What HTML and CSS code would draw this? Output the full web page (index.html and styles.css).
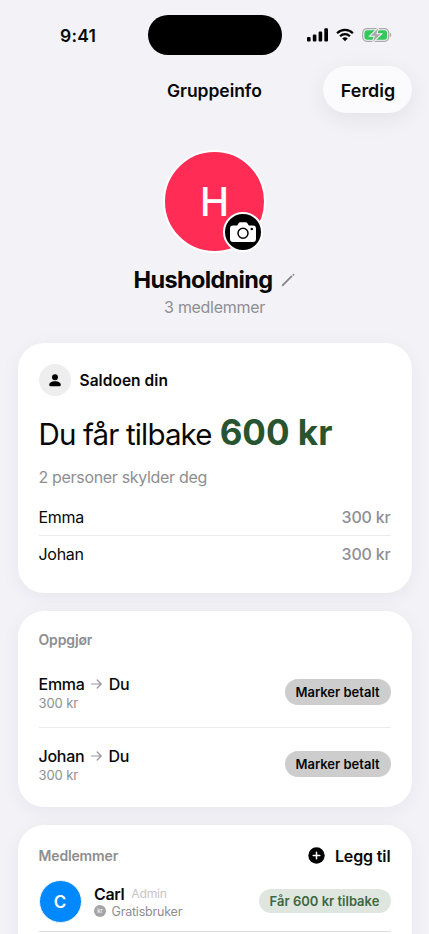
FILE: index.html
```html
<!DOCTYPE html>
<html lang="nb">
<head>
<meta charset="utf-8">
<title>Gruppeinfo</title>
<link rel="stylesheet" href="styles.css">
</head>
<body>
<div class="screen">
  <header class="status">
    <div class="time">9:41</div>
    <div class="island"></div>
    <div class="indicators">
      <svg class="signal" width="22" height="14" viewBox="0 0 22 14"><rect x="0" y="9" width="3.6" height="4.6" rx="1.1"/><rect x="5.8" y="6.6" width="3.6" height="7" rx="1.1"/><rect x="11.6" y="3.6" width="3.6" height="10" rx="1.1"/><rect x="17.3" y="0.3" width="3.7" height="13.3" rx="1.1"/></svg>
      <svg class="wifi" width="18" height="14" viewBox="0 0 18 14"><path d="M1.1 5.2a11.2 11.2 0 0 1 15.8 0M4.1 8.2a7 7 0 0 1 9.8 0" fill="none" stroke="#000" stroke-width="2.3"/><path d="M9 13.3 6.2 10.5a4 4 0 0 1 5.6 0z"/></svg>
      <svg class="battery" width="30" height="14" viewBox="0 0 30 14"><rect x=".7" y=".6" width="26" height="12.8" rx="4.2" fill="none" stroke="#a9a9ae" stroke-width="1.2"/><rect x="2.4" y="2.2" width="22.6" height="9.6" rx="2.8" fill="#34c759"/><path d="M27.900 4.800c1.800.6 1.800 3.800 0 4.400z" fill="#a9a9ae"/><path d="M16.200.3 8.600 7.800h4.300L11 13.700l7.600-7.400h-4.300z" fill="#a9a9ae" stroke="#f2f2f7" stroke-width="2" paint-order="stroke"/></svg>
    </div>
  </header>

  <nav class="navbar">
    <h1 class="nav-title">Gruppeinfo</h1>
    <button class="done">Ferdig</button>
  </nav>

  <section class="profile">
    <div class="group-avatar">H
      <span class="camera"><svg width="26" height="21" viewBox="0 0 26 21"><path d="M3 3.500h4.200l1.400-2.300Q9.300.3 10.400.3h5.200q1.100 0 1.800.9l1.400 2.300H23q3 0 3 3V17q0 3-3 3H3q-3 0-3-3V6.500q0-3 3-3z" fill="#fff"/><circle cx="13" cy="11.300" r="5" fill="none" stroke="#000" stroke-width="1.500"/><circle cx="21.800" cy="7" r="1.300"/></svg></span>
    </div>
    <div class="name-row"><h2 class="name">Husholdning</h2><svg width="14" height="14" viewBox="0 0 14 14"><path d="M1.600 12.300 11 2.900" stroke="#87878b" stroke-width="1.900"/><path d="M.5 13.500 1.300 11.400 2.600 12.700zM11.300 1.800l1-.9q.5-.3.900.1.400.4.100.9l-.9 1z" fill="#87878b"/></svg></div>
    <div class="count">3 medlemmer</div>
  </section>

  <main class="cards">
    <section class="card balance">
      <div class="card-head">
        <span class="person"><svg width="12" height="13" viewBox="0 0 12 13"><circle cx="6" cy="3.300" r="3"/><path d="M.2 10.700C.3 8.600 2.800 7.300 6 7.300s5.700 1.300 5.800 3.400q0 1.500-1.500 1.500H1.700Q.2 12.200.2 10.700z"/></svg></span>
        <span class="head-label">Saldoen din</span>
      </div>
      <p class="total"><span class="total-text">Du får tilbake</span><strong class="amount">600 kr</strong></p>
      <p class="debtors">2 personer skylder deg</p>
      <div class="debt"><span class="debt-name">Emma</span><span class="debt-sum">300 kr</span></div>
      <div class="debt"><span class="debt-name">Johan</span><span class="debt-sum">300 kr</span></div>
    </section>

    <section class="card settle">
      <h3 class="section-title">Oppgjør</h3>
      <div class="transfer">
        <div class="transfer-info">
          <div class="route"><span>Emma</span><svg width="11" height="10" viewBox="0 0 11 10"><path d="M.6 5h9.600M6.200 1 10.200 5 6.200 9"/></svg><span>Du</span></div>
          <div class="sub">300 kr</div>
        </div>
        <button class="mark">Marker betalt</button>
      </div>
      <div class="transfer">
        <div class="transfer-info">
          <div class="route"><span>Johan</span><svg width="11" height="10" viewBox="0 0 11 10"><path d="M.6 5h9.600M6.200 1 10.200 5 6.200 9"/></svg><span>Du</span></div>
          <div class="sub">300 kr</div>
        </div>
        <button class="mark">Marker betalt</button>
      </div>
    </section>

    <section class="card members">
      <div class="members-head">
        <h3 class="section-title">Medlemmer</h3>
        <button class="add"><svg width="17" height="17" viewBox="0 0 17 17"><circle cx="8.500" cy="8.500" r="8.200"/><path d="M8.500 5.200v6.600M5.200 8.500h6.600" stroke="#fff" stroke-width="1.500" stroke-linecap="round"/></svg><span>Legg til</span></button>
      </div>
      <div class="member">
        <span class="member-avatar">C</span>
        <div class="member-info">
          <div class="member-name"><span class="carl">Carl</span><span class="role">Admin</span></div>
          <div class="plan"><span class="coin">kr</span><span class="plan-label">Gratisbruker</span></div>
        </div>
        <span class="gets">Får 600 kr tilbake</span>
      </div>
    </section>
  </main>
</div>
</body>
</html>
```
FILE: styles.css
```css
* { box-sizing: border-box; margin: 0; padding: 0; }
html, body { height: 934px; overflow: hidden; }
body { background: #f2f2f7; color: #080808; font-family: Inter, "Liberation Sans", sans-serif; }
button { font: inherit; color: inherit; border: 0; background: none; white-space: nowrap; }
span, p, h1, h2, h3 { white-space: nowrap; }
svg { display: block; flex: none; }
.screen { width: 429px; height: 934px; overflow: hidden; display: flex; flex-direction: column; }

.status { height: 66px; flex: none; padding-top: 15px; display: grid; grid-template-columns: 147.500px 134.500px 1fr; }
.time { padding-left: 60px; padding-top: 1px; line-height: 40px; font-size: 17.500px; font-weight: 600; letter-spacing: .2px; }
.island { height: 39.500px; border-radius: 20px; background: #000; }
.indicators { height: 40px; padding-left: 25px; display: flex; align-items: center; }
.wifi { margin-left: 6.500px; }
.battery { margin-left: 8px; }

.navbar { height: 48px; flex: none; display: grid; grid-template-columns: 323px 89px; }
.nav-title { padding-left: 167px; padding-top: 1px; font-size: 17.500px; line-height: 48px; font-weight: 600; letter-spacing: -.05px; }
.done { height: 47px; padding: 2px 0 0 1px; border-radius: 24px; background: #fbfbfe; font-size: 17.900px; font-weight: 600; box-shadow: 0 6px 24px rgba(0,0,0,.07); }

.profile { height: 229px; flex: none; padding-top: 36px; display: flex; flex-direction: column; align-items: center; }
.group-avatar { position: relative; width: 103px; height: 103px; border: 2px solid #fff; border-radius: 50%; background: #ff2d55; color: #fff; font-size: 39px; font-weight: 500; line-height: 99px; text-align: center; }
.camera { position: absolute; right: 1.500px; bottom: -1px; width: 40px; height: 40px; border: 2px solid #fff; border-radius: 50%; background: #000; display: grid; place-items: center; }
.name-row { margin-top: 11px; height: 32px; display: flex; align-items: center; gap: 9px; }
.name { font-size: 23.500px; line-height: 32px; font-weight: 700; letter-spacing: -.65px; }
.count { height: 24px; line-height: 23px; font-size: 16px; letter-spacing: -.3px; color: #8e8e93; }

.cards { padding: 0 17.500px; display: flex; flex-direction: column; gap: 18px; }
.card { flex: none; padding: 0 21px; border-radius: 26px; background: #fff; box-shadow: 0 4px 20px rgba(30,20,60,.05); }
.balance { height: 249.500px; padding-top: 21px; }
.card-head { height: 32px; display: flex; align-items: center; gap: 9px; }
.person { width: 32px; height: 32px; border-radius: 50%; background: #eee; display: grid; place-items: center; }
.head-label { font-size: 15.500px; font-weight: 600; letter-spacing: .05px; }
.total { margin-top: 14px; height: 44px; display: flex; align-items: baseline; gap: 8px; line-height: 44px; }
.total-text { font-size: 29.500px; letter-spacing: -.85px; }
.amount { font-size: 35px; font-weight: 700; color: #285430; }
.debtors { margin-top: 11px; height: 24px; line-height: 24px; font-size: 16px; letter-spacing: -.32px; color: #8e8e90; }
.debt { height: 36.500px; display: flex; align-items: center; justify-content: space-between; font-size: 16px; }
.debt:nth-of-type(2) { margin-top: 10px; height: 37px; border-bottom: 1px solid #ebebee; }
.debt-name { letter-spacing: -.3px; }
.debt-sum { font-weight: 500; letter-spacing: -.2px; color: #8e8e93; }

.settle { height: 196.500px; padding-top: 17px; }
.section-title { height: 24px; line-height: 24px; font-size: 14px; font-weight: 600; letter-spacing: -.15px; color: #8e8e90; }
.transfer { height: 71.500px; display: flex; align-items: center; justify-content: space-between; }
.transfer:nth-of-type(1) { margin-top: 5px; border-bottom: 1px solid #ebebed; }
.transfer-info { padding-top: 1px; }
.route { height: 21px; display: flex; align-items: center; gap: 6.500px; padding-top: 1px; font-size: 16px; font-weight: 500; letter-spacing: -.25px; }
.route path { fill: none; stroke: #98989c; stroke-width: 1.200; stroke-linecap: round; stroke-linejoin: round; }
.sub { height: 18px; line-height: 19px; font-size: 13px; letter-spacing: -.1px; color: #8e8e93; }
.mark { width: 106px; height: 26px; border-radius: 13px; background: #cdcdcd; font-size: 13px; font-weight: 600; }

.members { height: 200px; padding-top: 17.500px; }
.members-head { height: 26px; display: flex; align-items: center; justify-content: space-between; }
.add { display: flex; align-items: center; gap: 10px; font-size: 16px; font-weight: 600; letter-spacing: -.12px; }
.member { height: 63px; padding-top: 3px; display: flex; align-items: center; border-bottom: 1px solid #ddd; }
.member-avatar { width: 43px; height: 43px; border: 1px solid #f4f4f4; border-radius: 50%; background: #0088ff; color: #fff; font-size: 17px; font-weight: 600; line-height: 42px; text-align: center; }
.member-info { margin-left: 12.500px; padding-top: 1px; }
.member-name { height: 19px; display: flex; align-items: center; gap: 7px; }
.carl { font-size: 16px; font-weight: 600; letter-spacing: -.4px; }
.role { font-size: 12.200px; letter-spacing: -.2px; color: #c6c6c8; }
.plan { height: 16px; display: flex; align-items: center; gap: 5.500px; font-size: 12.500px; color: #8e8e93; }
.plan-label { letter-spacing: -.2px; }
.coin { width: 12px; height: 12px; border-radius: 50%; background: #a5a5a8; color: #fff; font-size: 6px; line-height: 12px; text-align: center; }
.gets { width: 132px; height: 24px; margin-left: auto; border-radius: 12px; background: #dfe6e0; color: #3c6844; font-size: 13px; font-weight: 600; line-height: 24px; text-align: center; }
```
